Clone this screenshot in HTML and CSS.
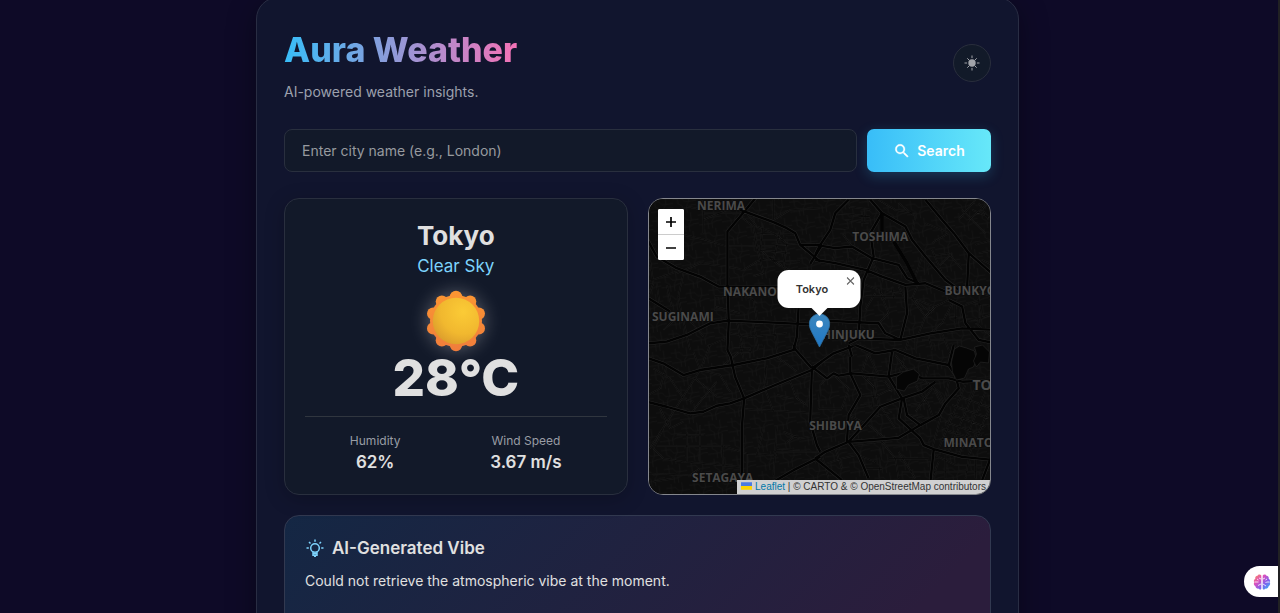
FILE: index.html
```html
<!DOCTYPE html>
<html lang="en">
<head>
<meta charset="utf-8">
<meta name="viewport" content="width=device-width, initial-scale=1">
<title>Aura Weather</title>
<link rel="stylesheet" href="styles.css">
</head>
<body>
<main class="shell">
  <header class="top">
    <div>
      <h1 class="title">Aura Weather</h1>
      <p class="tagline">AI-powered weather insights.</p>
    </div>
    <button class="theme" type="button" aria-label="Toggle theme">
      <svg width="16" height="16" viewBox="0 0 16 16"><circle cx="8" cy="8" r="3.700" fill="currentColor"/><path d="M8 .5v2.600M8 12.900v2.600M.5 8h2.600M12.900 8h2.600M3.300 3.300l1.700 1.700M11 11l1.700 1.700M3.300 12.700L5 11M11 5l1.700-1.700" stroke="currentColor" stroke-width="1"/></svg>
    </button>
  </header>

  <form class="search">
    <input class="search-input" type="text" aria-label="City name" placeholder="Enter city name (e.g., London)">
    <button class="search-button" type="button">
      <svg width="18" height="18" viewBox="0 0 24 24" fill="currentColor" stroke="currentColor" stroke-width=".4"><path d="M15.500 14h-.79l-.28-.27A6.470 6.470 0 0 0 16 9.500 6.500 6.500 0 1 0 9.500 16c1.610 0 3.090-.59 4.230-1.570l.27.28v.79l5 4.990L20.490 19l-4.990-5zm-6 0C7.010 14 5 11.990 5 9.500S7.010 5 9.500 5 14 7.010 14 9.500 11.990 14 9.500 14z"/></svg>
      Search
    </button>
  </form>

  <div class="panels">
    <section class="weather">
      <h2 class="city">Tokyo</h2>
      <p class="sky">Clear Sky</p>
      <svg class="sun" width="64" height="64" viewBox="0 0 64 64">
        <defs>
          <linearGradient id="rays" gradientUnits="userSpaceOnUse" x1="0" y1="2" x2="0" y2="62"><stop offset="0" stop-color="#fb9632"/><stop offset="1" stop-color="#f07d3c"/></linearGradient>
          <radialGradient id="disc" cx=".65" cy=".3" r=".8"><stop offset="0" stop-color="#fbcb36"/><stop offset=".6" stop-color="#f1b82f"/><stop offset="1" stop-color="#d99a2c"/></radialGradient>
        </defs>
        <g fill="url(#rays)">
          <circle cx="32" cy="32" r="26"/>
          <circle cx="32" cy="8" r="6.200"/><circle cx="46.100" cy="12.600" r="6.200"/><circle cx="54.800" cy="24.600" r="6.200"/><circle cx="54.800" cy="39.400" r="6.200"/><circle cx="46.100" cy="51.400" r="6.200"/><circle cx="32" cy="56" r="6.200"/><circle cx="17.900" cy="51.400" r="6.200"/><circle cx="9.200" cy="39.400" r="6.200"/><circle cx="9.200" cy="24.600" r="6.200"/><circle cx="17.900" cy="12.600" r="6.200"/>
        </g>
        <circle cx="32" cy="32" r="23.200" fill="url(#disc)"/>
      </svg>
      <p class="temp">28°C</p>
      <dl class="stats">
        <div><dt>Humidity</dt><dd>62%</dd></div>
        <div><dt>Wind Speed</dt><dd>3.67 m/s</dd></div>
      </dl>
    </section>

    <section class="map" aria-label="Map">
      <svg class="tiles" viewBox="0 0 341 295" preserveAspectRatio="xMidYMid slice">
        <defs>
          <pattern id="blocks" width="23" height="19" patternUnits="userSpaceOnUse" patternTransform="rotate(-8)"><path d="M0 4h9l3 4h11M5 0v9l4 3v7M16 0v8l-3 4v7M0 14h12l6-2h5" fill="none" stroke="#141414" stroke-width=".7"/></pattern>
          <g id="major">
            <g transform="translate(-9 -9) scale(.3333)">
              <path d="M350 20L300 80 262 125V290L266 395 262 480M300 60L400 97 440 115 465 130 480 165 540 215M20 145L50 200 110 235 180 260 235 290H415M25 325L90 365M25 460L80 455 140 435 210 400 262 392 400 398 540 405M475 355L470 440 460 480M510 222L545 165M480 165H545"/>
              <path d="M25 505L70 520 130 555 180 540 280 525 380 505 465 478 515 535M262 480L272 500 285 560 312 625M465 478L460 465M515 535L580 490 640 468"/>
            </g>
            <g transform="translate(166 -9) scale(.3333)">
              <path d="M100 30L60 70 45 120 15 165 0 195M165 30L200 70 270 110 290 150 330 200 390 270 430 300M0 165L60 175 110 170 170 205 250 225 275 265 310 280M0 210L60 220 150 240 200 260 270 285 330 280 390 305M330 30L380 90 415 130 460 190 540 260M460 190L455 290M200 70L165 130 175 200 145 270 135 350 130 440M400 330L440 350 450 400 490 450 540 460M270 290L275 370 255 450M30 392L190 400 210 430 255 450 300 440 345 430 440 415 540 420M100 460L130 445 255 450M100 465L110 500M120 465L180 490 240 480 300 505 400 525"/>
              <path d="M200 70V125M235 155L275 220 305 280" stroke-width="11"/>
            </g>
            <g transform="translate(-9 146) scale(.3333)">
              <path d="M312 160L305 250V390M515 72L510 230 530 300 540 320M400 410L460 375 540 335"/>
              <path d="M20 170L80 185 150 205 190 200 230 182 270 175 312 160 400 122 515 75 545 50"/>
            </g>
            <g transform="translate(166 146) scale(.3333)">
              <path d="M-10 65L35 100 55 85 70 92 110 85 220 95 280 80 320 100 400 100 440 110M105 35L105 85 135 150 100 210 95 290M230 20L220 95 260 160 250 220 315 280 325 300 355 312 440 335 540 345M0 340L30 320 100 290 250 278 315 240 370 210 390 175 430 130 420 90 400 60L415 0M440 110L540 105M260 160L320 140 360 110M260 160L195 185 150 235 100 290 130 330 160 400M355 312L345 410M265 160L275 210 315 240M0 340L80 405M525 340L500 405"/>
            </g>
          </g>
          <g id="minor">
            <g transform="translate(-9 -9) scale(.3333)">
              <path d="M130 135L190 148 255 168H400L480 160M130 250L115 320 125 370 150 480M25 275L110 245M110 250L180 220 262 230 310 240 350 215 400 200M300 80L340 110 350 170 370 250 340 260M320 70L350 110 400 130 440 160 430 230M400 30V90L450 60 540 55M350 130L470 135M370 100L360 180 420 230M420 120L400 210 460 250M340 150H480M350 180L450 190M360 210L480 215M225 320V360H262M225 320H262M225 350L300 370M190 30V130M190 70H340M140 50L190 60M262 60L190 90M260 300L340 330 350 390M300 290L350 340M270 430L330 440 440 430M270 440L200 470M290 395L310 480M340 395L355 480M400 400L410 480M30 210L40 280 25 320M50 280L60 350M80 285L95 350M125 370L70 420M140 380L190 440"/>
            </g>
            <g transform="translate(166 -9) scale(.3333)">
              <path d="M60 70L120 75 160 80M140 65V110M130 80H165M150 60V95M100 50L165 60M90 90L160 100M80 130L110 170M45 120L100 115M250 40L300 80 290 130M240 60L300 70M330 100L400 130M330 200L400 190 440 240M350 180L380 250M370 230L410 190M400 130L350 160M440 60L510 130M460 90L520 40M470 60L540 90M430 90L480 30M490 40L520 90M480 165L530 150M490 190L540 180M500 210L540 230M320 200L300 260M330 190V250M170 205L190 260M190 30L240 60M200 150L250 160M60 180L50 220M100 175L95 230M200 260L195 310 220 370 190 400M230 290L235 325M250 290L270 330M310 280L290 325 350 370M290 325L330 380 310 430M140 280L190 300 210 325 290 325 360 350 400 330M360 350L330 380M180 310L150 360M150 320H240M215 300L265 310M410 340L380 400 345 430M420 330V400M400 380L480 390 540 370M440 350L490 330 500 390M470 340L540 350M480 400L530 440M380 430L400 480M340 440L350 480M320 450H440M300 440V480M280 450L270 480M490 300V400M470 300L530 320"/>
            </g>
            <g transform="translate(-9 146) scale(.3333)">
              <path d="M210 0L180 75 30 310M130 92L165 100 230 155 300 165M312 192L540 205M50 303H250L320 325 410 330M70 250L40 310 70 340 130 350 250 360 300 365M140 260V350M110 270H190M245 265L250 390M180 240V350M25 385L150 390 180 370M320 325V390M370 250L350 330M410 240L400 390M400 320H530M410 310L480 315M280 10H330V40M290 20H335M300 0L310 40M370 0L380 120M400 30L430 50 470 80M180 75L240 90 270 140M160 20L180 75M80 60L60 130 25 150M40 70L90 100 130 160 160 170M150 210L180 170 230 110M60 190L90 250 130 230M380 60L370 120 400 200M410 150L460 160M450 110L470 160 500 180M430 260L480 280 530 270M440 290L470 270M40 410L100 400M300 20L250 60"/>
            </g>
            <g transform="translate(166 146) scale(.3333)">
              <path d="M30 105L15 120 10 190 80 190 100 130 60 95M160 25L140 80M140 90L180 130 190 180M150 100L210 110 230 140M180 110L170 190M130 150L180 155 230 130M135 180L195 185M100 210L150 235M290 110L350 120 380 180M340 60L330 100M320 100L370 140 390 180M300 120L340 180 350 210M350 130L300 200M280 180L340 170M280 210L340 220M400 110L380 200 350 310M450 120L370 310M480 130L400 320M510 140L430 330M535 160L460 330M420 150L530 190M410 180L520 220M400 205L510 245M390 230L500 270M380 250L490 285M370 280L480 310M200 190L240 250M160 240L210 280M180 215L230 200M100 300L200 290 240 340 250 400M200 290L190 400M210 300L310 300M220 340H340M250 320L300 400M130 330L180 350M150 370H200M20 330L40 400M20 360L80 340 120 330M60 310L80 370M260 380H340M360 330L420 360 500 360M370 350L350 400M390 330V400M350 380H500M460 340L450 400M480 340V400M240 30L280 80M270 30L250 90M160 30L190 90M50 20L90 30M15 50H60M440 60L430 90M400 25L430 30"/>
            </g>
          </g>
        </defs>
        <rect width="341" height="295" fill="#0d0d0d"/>
        <rect width="341" height="295" fill="url(#blocks)"/>
        <g fill="none" stroke-linejoin="round">
          <use href="#minor" stroke="#212121" stroke-width="4.500"/>
          <use href="#minor" stroke="#080808" stroke-width="2.500"/>
          <use href="#major" stroke="#272727" stroke-width="10"/>
          <use href="#major" stroke="#030303" stroke-width="7"/>
        </g>
        <g fill="#050505" stroke="#242424" stroke-width=".7"><path d="M305 150l5-3 7 2 8 3 2 9-3 7-5 2-4 9-8 2-4-8-1-10z"/><path d="M325 148l8-2 7 7-1 11-8-1-4 5-3-6 3-7z"/><path d="M247 178l7-5 10-3 6 5-2 7-9 4-4 6-8-2z"/></g>
        <g class="places"><text x="48" y="11">NERIMA</text><text x="203" y="42">TOSHIMA</text><text x="74" y="97">NAKANO</text><text x="295" y="96">BUNKYO</text><text x="3" y="122">SUGINAMI</text><text x="166" y="140">SHINJUKU</text><text x="323" y="191" font-size="14">TOKYO</text><text x="160" y="231">SHIBUYA</text><text x="294" y="248">MINATO</text><text x="43" y="283">SETAGAYA</text></g>
      </svg>
      <div class="zoom"><button type="button" aria-label="Zoom in"><svg width="12" height="12"><path d="M6 1v10M1 6h10" stroke="#000" stroke-width="1.700"/></svg></button><button type="button" aria-label="Zoom out"><svg width="12" height="12"><path d="M1 6h10" stroke="#000" stroke-width="1.500"/></svg></button></div>
      <div class="marker">
        <div class="popup">Tokyo<button class="close" type="button" aria-label="Close popup"><svg width="8" height="8"><path d="M.5.5l7 7M7.500.5l-7 7" stroke="#666" stroke-width="1.100"/></svg></button></div>
        <svg class="pin" width="22" height="36" viewBox="0 0 22 36"><defs><linearGradient id="pin" x1="0" y1="0" x2="0" y2="1"><stop offset="0" stop-color="#3c86bd"/><stop offset="1" stop-color="#1f78c6"/></linearGradient></defs><path d="M11 1C5 1 .8 5.500.8 11c0 3 1.200 5.500 2.400 8L11 34l7.800-15c1.200-2.500 2.400-5 2.400-8C21.200 5.500 17 1 11 1z" fill="url(#pin)" stroke="#2e6f9f" stroke-width=".8"/><circle cx="11" cy="11" r="3.400" fill="#fff"/></svg>
      </div>
      <div class="credit"><a href="#leaflet"><svg width="11" height="8" viewBox="0 0 12 8"><path fill="#4c7be1" d="M0 0h12v4H0z"/><path fill="#ffd500" d="M0 4h12v4H0z"/></svg> Leaflet</a> | © CARTO &amp; © OpenStreetMap contributors</div>
    </section>
  </div>

  <section class="vibe">
    <h2 class="vibe-title">
      <svg width="20" height="20" viewBox="0 0 20 20" fill="none" stroke="currentColor" stroke-width="1.500"><circle cx="10" cy="10" r="4.300"/><path d="M8 13.500v3.700h4v-3.700M8 15.500h4M9 18.200h2M10 1.500v2.300M1.500 10h2.300M16.200 10h2.300M4 4l1.500 1.500M14.500 5.500L16 4"/></svg>
      AI-Generated Vibe
    </h2>
    <p class="vibe-text">Could not retrieve the atmospheric vibe at the moment.</p>
  </section>
</main>

<button class="assistant" type="button" aria-label="Open assistant">
  <svg width="18" height="18" viewBox="0 0 18 18"><defs><linearGradient id="brain" x1="0" y1="0" x2="1" y2="1"><stop offset="0" stop-color="#ff9457"/><stop offset=".35" stop-color="#dc4fbd"/><stop offset=".65" stop-color="#8061ed"/><stop offset="1" stop-color="#28bff5"/></linearGradient></defs><path d="M8.300 2.500C7.500 1 5.200 1 4.500 2.700 2.800 2.700 1.800 4.300 2.300 5.700.8 6.500.5 8.300 1.200 9.300.4 10.800 1 12.500 2.400 13.200c.3 1.700 1.600 2.600 3 2.400 1 1.300 2.500 1.200 2.900.1zM9.700 2.500c.8-1.500 3.100-1.500 3.800.2 1.700 0 2.700 1.600 2.200 3 1.500.8 1.800 2.600 1.100 3.600.8 1.500.2 3.200-1.200 3.900-.3 1.700-1.600 2.600-3 2.400-1 1.300-2.500 1.200-2.900.1z" fill="url(#brain)"/><path d="M8 6L6 5M1.500 9h4M8 11l-3 1.500M4 6l1.500 1M10 6l2-1M16.500 9h-3l-1 1M10 11l3 2M14 6l-1.500 1" stroke="#fff" stroke-width=".8" fill="none"/></svg>
</button>
</body>
</html>
```
FILE: styles.css
```css
* { box-sizing: border-box; }

body {
  margin: 0;
  padding-right: 3px;
  height: 100vh;
  overflow: hidden;
  background: #0e0a27;
  border-right: 2px solid #212123;
  font-family: Inter, "Liberation Sans", sans-serif;
  color: #e0e0e0;
}

h1, h2, p, dl, dd { margin: 0; }
button { font: inherit; cursor: pointer; }
svg { display: block; flex: none; }

.shell {
  max-width: 763px;
  margin: -3px auto 0;
  padding: 32px 27px;
  background: #11152e;
  border: 1px solid #292d43;
  border-radius: 22px;
  box-shadow: 0 7px 29px rgba(0, 0, 0, .35);
}

.top {
  display: flex;
  align-items: flex-start;
  justify-content: space-between;
}

.title {
  width: max-content;
  font-size: 34px;
  line-height: 40px;
  font-weight: 800;
  background: linear-gradient(90deg, #38bdf8, #f472b6);
  background-clip: text;
  color: transparent;
}

.tagline {
  margin-top: 11px;
  font-size: 14px;
  line-height: 22px;
  color: #9ca0ad;
}

.theme {
  display: grid;
  place-items: center;
  width: 38px;
  height: 38px;
  margin-top: 14px;
  padding: 0;
  color: #a2a4aa;
  background: #121a29;
  border: 1px solid #292e3c;
  border-radius: 50%;
}

.search {
  display: flex;
  gap: 10px;
  margin-top: 26px;
}

.search-input {
  flex: 1;
  min-width: 0;
  height: 43px;
  padding: 0 17px;
  font: 14px Inter, sans-serif;
  color: #e0e0e0;
  background: #121929;
  border: 1px solid #292f3e;
  border-radius: 8px;
}

.search-input::placeholder { color: #979a9f; opacity: 1; }

.search-button {
  display: flex;
  align-items: center;
  justify-content: center;
  gap: 6px;
  width: 124px;
  padding: 0;
  font-size: 14px;
  font-weight: 600;
  color: #fff;
  background: linear-gradient(90deg, #38bdf8, #67e8f9);
  border: 0;
  border-radius: 7px;
  box-shadow: 0 4px 13px rgba(56, 189, 248, .22);
}

.panels {
  display: grid;
  grid-template-columns: 1fr 1fr;
  gap: 20px;
  margin-top: 26px;
}

.weather {
  display: flex;
  flex-direction: column;
  align-items: center;
  padding: 21px 20px;
  background: #121929;
  border: 1px solid #292f3e;
  border-radius: 15px;
  box-shadow: 0 4px 20px rgba(0, 0, 0, .22);
}

.city { font-size: 26px; line-height: 32px; font-weight: 700; }
.sky { margin-top: 2px; font-size: 17px; line-height: 24px; color: #7dd3fc; }

.sun {
  margin-top: 11px;
  filter: drop-shadow(0 0 9px rgba(255, 255, 255, .3));
}

.temp { font-size: 51px; line-height: 54px; font-weight: 800; margin-top: -2px; }

.stats {
  display: flex;
  justify-content: space-around;
  width: 100%;
  margin-top: 11px;
  padding-top: 14px;
  border-top: 1px solid #30363f;
  text-align: center;
}

.stats dt { font-size: 12px; line-height: 20px; color: #999da5; }
.stats dd { font-size: 17px; line-height: 22px; font-weight: 600; }

.map {
  position: relative;
  overflow: hidden;
  background: #0d0d0d;
  border: 1px solid #85878d;
  border-radius: 15px;
}

.tiles {
  position: absolute;
  inset: 0;
  width: 100%;
  height: 100%;
}

.places {
  font: 700 12px "Open Sans", sans-serif;
  fill: #4a4a4a;
  stroke: #0b0b0b;
  stroke-width: 1px;
  paint-order: stroke;
}

.zoom {
  position: absolute;
  top: 10px;
  left: 9px;
  width: 26px;
  overflow: hidden;
  border-radius: 2px;
  background: #fff;
}

.zoom button {
  display: grid;
  place-items: center;
  width: 26px;
  height: 25px;
  padding: 0;
  background: #fff;
  border: 0;
}

.zoom button:first-child { height: 26px; border-bottom: 1px solid #ccc; }

.marker {
  position: absolute;
  top: 71px;
  left: 50%;
  display: flex;
  flex-direction: column;
  align-items: center;
  gap: 5px;
  transform: translateX(-50%);
}

.popup {
  position: relative;
  width: 83px;
  padding: 10px 18px;
  font-size: 11px;
  line-height: 18px;
  font-weight: 600;
  color: #333;
  background: #fff;
  border-radius: 11px;
}

.popup::after {
  content: "";
  position: absolute;
  top: 100%;
  left: 50%;
  margin-left: -8px;
  border: 8px solid transparent;
  border-top-color: #fff;
  border-bottom: 0;
}

.close {
  position: absolute;
  top: 7px;
  right: 6px;
  padding: 0;
  background: none;
  border: 0;
}

.credit {
  position: absolute;
  right: 0;
  bottom: 0;
  padding: 0 4px;
  font: 10px/14px "Liberation Sans", Arial, sans-serif;
  color: #333;
  white-space: nowrap;
  background: #d0d0d1;
}

.credit a { color: #0078a8; text-decoration: none; }
.credit svg { display: inline-block; }

.vibe {
  min-height: 150px;
  margin-top: 20px;
  padding: 20px;
  background: linear-gradient(135deg, #142744, #2b1d3c 85%);
  border: 1px solid #323950;
  border-radius: 15px;
}

.vibe-title {
  display: flex;
  align-items: center;
  gap: 7px;
  font-size: 17px;
  line-height: 24px;
  font-weight: 600;
}

.vibe-title svg { color: #7dd3fc; }
.vibe-text { margin-top: 9px; font-size: 14px; line-height: 24px; }

.assistant {
  position: fixed;
  right: 2px;
  bottom: 16px;
  display: flex;
  align-items: center;
  width: 34px;
  height: 31px;
  padding: 0 0 0 9px;
  background: #fff;
  border: 0;
  border-radius: 16px 0 0 16px;
}
```
